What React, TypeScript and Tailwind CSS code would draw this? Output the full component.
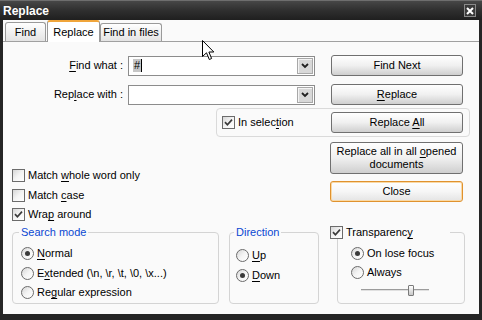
import React from 'react'

const U = ({ children }: { children: React.ReactNode }) => <span className="underline underline-offset-[2px]">{children}</span>

const CheckBox = ({ checked }: { checked?: boolean }) => (
  <span className="flex h-[13px] w-[13px] shrink-0 items-center justify-center border border-[#6b6b6b] bg-gradient-to-br from-[#d6d6d6] via-[#f4f4f4] to-white">
    {checked && (
      <svg width="9" height="9" viewBox="0 0 9 9">
        <path d="M1 4.2 L3.4 6.8 L8 1.6" fill="none" stroke="#3a3a3a" strokeWidth="1.7" />
      </svg>
    )}
  </span>
)

const Radio = ({ checked }: { checked?: boolean }) => (
  <span className="flex h-[13px] w-[13px] shrink-0 items-center justify-center rounded-full border border-[#6b6b6b] bg-gradient-to-br from-[#d6d6d6] via-[#f4f4f4] to-white">
    {checked && <span className="h-[5px] w-[5px] rounded-full bg-[#3a3a3a]" />}
  </span>
)

const Btn = ({ children, className = '', focus }: { children: React.ReactNode; className?: string; focus?: boolean }) => (
  <div
    className={`flex w-[132px] shrink-0 items-center justify-center rounded-[3px] border text-center leading-[13px] ${
      focus
        ? 'border-[#e0922e] bg-gradient-to-b from-white via-[#f6f6f6] to-[#e4e4e4] shadow-[inset_0_0_0_1px_#f9d9a6]'
        : 'border-[#707070] bg-gradient-to-b from-white via-[#f0f0f0] to-[#cfcfcf]'
    } ${className}`}
  >
    <span>{children}</span>
  </div>
)

const Combo = ({ value }: { value?: string }) => (
  <div className="flex h-[20px] w-[187px] items-stretch border border-[#8c8c8c] bg-white">
    <div className="flex flex-1 items-center pl-[4px]">
      {value && <span className="bg-[#c6c6c6] px-[1px] leading-[13px]">{value}</span>}
      {value && <span className="h-[13px] w-px bg-black" />}
    </div>
    <div className="m-px flex w-[16px] items-center justify-center border border-[#a8a8a8] bg-[#d8d8d8] shadow-[inset_1px_1px_0_#f4f4f4]">
      <svg width="8" height="6" viewBox="0 0 8 6">
        <path d="M1 1 L4 4 L7 1" fill="none" stroke="#202020" strokeWidth="1.8" />
      </svg>
    </div>
  </div>
)

const Item = ({ control, children, className = '' }: { control: React.ReactNode; children: React.ReactNode; className?: string }) => (
  <div className={`flex h-[13px] items-center gap-[3px] whitespace-nowrap ${className}`}>
    {control}
    <span className="leading-[13px]">{children}</span>
  </div>
)

export default function App() {
  return (
    <div className="relative flex h-[320px] w-[482px] flex-col overflow-hidden bg-[#252525] font-['Liberation_Sans',Arial,sans-serif] text-[11px] text-black">
      {/* Title bar */}
      <div className="flex h-[20px] shrink-0 items-center justify-between border-t border-[#6e6e6e] bg-gradient-to-b from-[#474747] via-[#2f2f2f] to-[#1f1f1f] pl-[3px] pr-[6px]">
        <span className="text-[12px] font-bold leading-[14px] text-white">Replace</span>
        <div className="flex h-[13px] w-[12px] items-center justify-center border border-[#8a8a8a] bg-[#3a3a3a]">
          <svg width="8" height="8" viewBox="0 0 8 8">
            <path d="M1 1 L7 7 M7 1 L1 7" stroke="white" strokeWidth="2" />
          </svg>
        </div>
      </div>

      {/* Client area */}
      <div className="mx-[3px] mb-[6px] flex flex-1 flex-col bg-[#fafafa]">
        {/* Tabs */}
        <div className="flex h-[21px] items-end pl-[2px]">
          <div className="flex h-[19px] w-[41px] items-center justify-center rounded-t-[3px] border border-b-0 border-[#9a9a9a] bg-gradient-to-b from-white to-[#e4e4e4]">
            Find
          </div>
          <div className="relative z-10 -mb-px ml-px flex h-[22px] w-[53px] items-center justify-center rounded-t-[3px] border border-b-0 border-[#9a9a9a] border-t-[2px] border-t-[#f0a53a] bg-white">
            Replace
          </div>
          <div className="flex h-[18px] w-[62px] items-center justify-center rounded-t-[3px] border border-b-0 border-[#9a9a9a] bg-gradient-to-b from-white to-[#e4e4e4]">
            Find in files
          </div>
        </div>

        {/* Panel */}
        <div className="flex flex-1 flex-col border-t border-[#a0a0a0]">
          <div className="mt-[13px] flex h-[21px] items-center">
            <div className="w-[120px] text-right">
              <U>F</U>ind what :
            </div>
            <div className="ml-[5px]">
              <Combo value="#" />
            </div>
            <Btn className="ml-[16px] h-[21px]">Find Next</Btn>
          </div>

          <div className="mt-[8px] flex h-[21px] items-center">
            <div className="w-[120px] text-right">
              Rep<U>l</U>ace with :
            </div>
            <div className="ml-[5px]">
              <Combo />
            </div>
            <Btn className="ml-[16px] h-[21px]">
              <U>R</U>eplace
            </Btn>
          </div>

          <div className="ml-[213px] mt-[3px] flex h-[29px] w-[254px] items-center justify-between rounded-[4px] border border-[#dadada] pl-[5px] pr-[6px]">
            <Item control={<CheckBox checked />}>
              In selec<U>t</U>ion
            </Item>
            <Btn className="h-[21px]">
              Replace <U>A</U>ll
            </Btn>
          </div>

          <div className="flex">
            <div className="flex w-[327px] flex-col pl-[9px] pt-[32px]">
              <Item control={<CheckBox />}>
                Match <U>w</U>hole word only
              </Item>
              <Item control={<CheckBox />} className="mt-[7px]">
                Match <U>c</U>ase
              </Item>
              <Item control={<CheckBox checked />} className="mt-[6px]">
                Wra<U>p</U> around
              </Item>
            </div>
            <div className="flex flex-col pt-[5px]">
              <Btn className="h-[32px] w-[133px]">
                Replace all in all <U>o</U>pened
                <br />
                documents
              </Btn>
              <Btn focus className="mt-[7px] h-[21px] w-[133px]">
                Close
              </Btn>
            </div>
          </div>

          {/* Groups */}
          <div className="mt-[5px] flex pl-[9px]">
            <fieldset className="h-[78px] w-[207px] rounded-[4px] border border-[#d4d4d4] pl-[8px]">
              <legend className="ml-[-2px] px-[2px] leading-[13px] text-[#0a48d2]">Search mode</legend>
              <Item control={<Radio checked />} className="mt-[8px]">
                <U>N</U>ormal
              </Item>
              <Item control={<Radio />} className="mt-[7px]">
                E<U>x</U>tended (\n, \r, \t, \0, \x...)
              </Item>
              <Item control={<Radio />} className="mt-[6px]">
                Re<U>g</U>ular expression
              </Item>
            </fieldset>

            <fieldset className="ml-[10px] h-[78px] w-[90px] rounded-[4px] border border-[#d4d4d4] pl-[6px]">
              <legend className="ml-[-2px] px-[2px] leading-[13px] text-[#0a48d2]">Direction</legend>
              <Item control={<Radio />} className="mt-[10px]">
                <U>U</U>p
              </Item>
              <Item control={<Radio checked />} className="mt-[7px]">
                <U>D</U>own
              </Item>
            </fieldset>

            <fieldset className="ml-[18px] h-[78px] w-[128px] rounded-[4px] border border-[#d4d4d4] pl-[13px]">
              <legend className="ml-[-21px] w-[120px] leading-[13px]">
                <Item control={<CheckBox checked />}>
                  Transparenc<U>y</U>
                </Item>
              </legend>
              <Item control={<Radio checked />} className="mt-[8px]">
                On lose focus
              </Item>
              <Item control={<Radio />} className="mt-[6px]">
                Always
              </Item>
              <div className="relative ml-[10px] mt-[6px] h-[11px] w-[68px]">
                <div className="absolute left-0 right-0 top-[4px] h-[2px] border-t border-[#9c9c9c] border-b-white bg-[#e0e0e0]" />
                <div className="absolute left-[47px] top-0 h-[11px] w-[6px] rounded-[1px] border border-[#7a7a7a] bg-gradient-to-b from-white to-[#c8c8c8]" />
              </div>
            </fieldset>
          </div>
        </div>
      </div>

      {/* Mouse pointer */}
      <svg className="absolute left-[202px] top-[40px]" width="13" height="21" viewBox="0 0 13 21">
        <path d="M0.5 0.5 L0.5 16.5 L4.5 12.8 L7.3 19.5 L9.6 18.5 L6.9 12 L11.8 12 Z" fill="white" stroke="black" strokeWidth="1" />
      </svg>
    </div>
  )
}
